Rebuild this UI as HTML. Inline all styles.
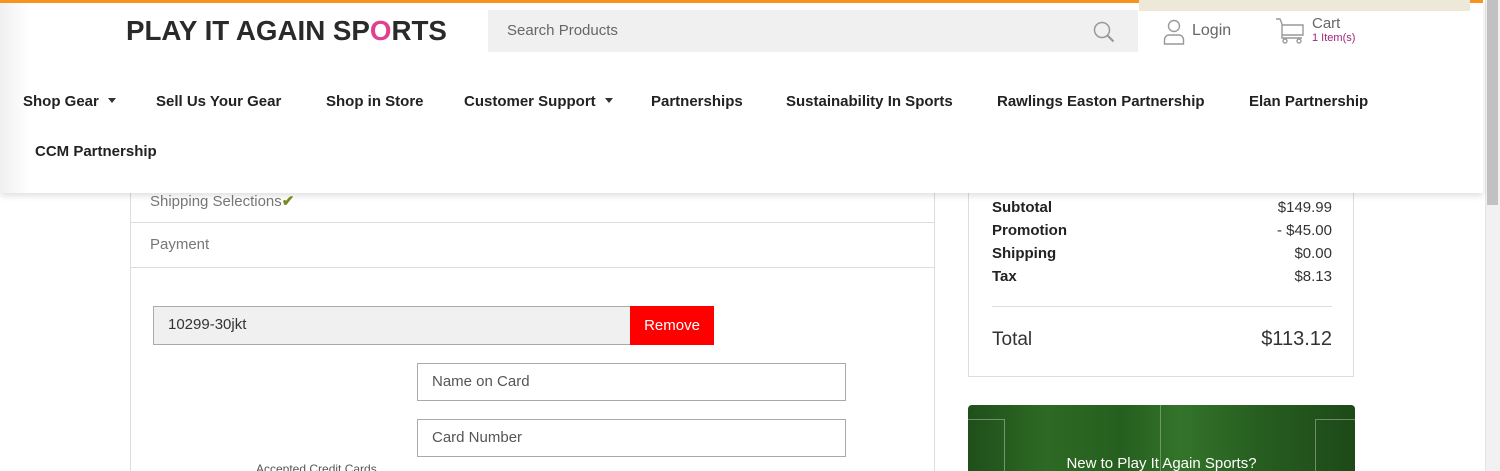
<!DOCTYPE html>
<html style="width:1500px;height:471px;overflow:hidden"><head><meta charset="utf-8"><style>
*{box-sizing:border-box;margin:0;padding:0}
body{width:1500px;height:471px;overflow:hidden;background:#fff;font-family:"Liberation Sans",sans-serif;position:relative;color:#333}
.abs{position:absolute}
.sb{left:1485px;top:0;width:15px;height:471px;background:#f1f1f1;border-left:1px solid #e4e4e4}
.thumb{left:1487px;top:0;width:11px;height:205px;background:#c1c1c1}
.header{left:0;top:0;width:1483px;height:193px;background:#fff;box-shadow:0 3px 6px rgba(0,0,0,.12);z-index:5}
.top{left:0;top:0;width:1483px;height:3px;background:#f7941d}
.logo{left:126px;top:15px;font-size:28px;font-weight:bold;letter-spacing:0;color:#2a2a2a;transform:scaleX(.99);transform-origin:left;white-space:nowrap}
.search{left:488px;top:10px;width:650px;height:42px;background:#f0f0f0}
.search span{position:absolute;left:19px;top:12px;font-size:15px;color:#666}
.banner{left:1139px;top:0;width:331px;height:11px;background:#ede8d8}
.nav{font-size:15px;font-weight:bold;color:#222;top:93px}
.tri{display:inline-block;border-left:4px solid transparent;border-right:4px solid transparent;border-top:5px solid #333;margin-left:9px;vertical-align:3px}
.lt{color:#666;font-size:15px}
.panel{left:130px;top:180px;width:805px;height:300px;border:1px solid #ddd;border-top:none}
.row{left:131px;width:803px;border-bottom:1px solid #ddd}
.inp{border:1px solid #aaa;background:#fff;font-size:15px;color:#555;padding-left:14px;line-height:36px}
.sum{left:968px;top:180px;width:386px;height:197px;border:1px solid #ddd;border-top:none}
.sl{left:992px;font-size:15px;font-weight:bold;color:#222}
.sr{right:168px;font-size:15px;color:#333;text-align:right}
.green{left:968px;top:405px;width:387px;height:66px;border-radius:4px 4px 0 0;background:linear-gradient(90deg,#1f4f1a,#2d6a24 20%,#265f1f 40%,#33742a 55%,#275e20 75%,#1d4a18);overflow:hidden}
</style></head><body>
<div class="abs sb"></div><div class="abs thumb"></div>
<div class="abs panel"></div>
<div class="abs row" style="top:180px;height:43px"></div>
<div class="abs" style="left:150px;top:192px;font-size:15px;color:#777">Shipping Selections<span style="color:#7a8a1f;font-weight:bold">✔</span></div>
<div class="abs row" style="top:223px;height:45px"></div>
<div class="abs" style="left:150px;top:236px;font-size:15px;color:#777">Payment</div>
<div class="abs inp" style="left:153px;top:306px;width:478px;height:39px;background:#f0f0f0;color:#333">10299-30jkt</div>
<div class="abs" style="left:630px;top:306px;width:84px;height:39px;background:#ff0000;color:#fff;font-size:15px;text-align:center;line-height:39px">Remove</div>
<div class="abs inp" style="left:417px;top:363px;width:429px;height:38px">Name on Card</div>
<div class="abs inp" style="left:417px;top:419px;width:429px;height:38px">Card Number</div>
<div class="abs" style="left:256px;top:462px;font-size:12px;color:#555">Accepted Credit Cards</div>
<div class="abs sum"></div>
<div class="abs sl" style="top:199px">Subtotal</div><div class="abs sr" style="top:199px">$149.99</div>
<div class="abs sl" style="top:222px">Promotion</div><div class="abs sr" style="top:222px">- $45.00</div>
<div class="abs sl" style="top:245px">Shipping</div><div class="abs sr" style="top:245px">$0.00</div>
<div class="abs sl" style="top:268px">Tax</div><div class="abs sr" style="top:268px">$8.13</div>
<div class="abs" style="left:992px;top:306px;width:340px;height:1px;background:#ddd"></div>
<div class="abs" style="left:992px;top:329px;font-size:19px;color:#333">Total</div>
<div class="abs sr" style="top:328px;font-size:20px">$113.12</div>
<div class="abs green">
<div class="abs" style="left:0;top:14px;width:37px;height:70px;border:1px solid rgba(255,255,255,.35);border-left:none"></div>
<div class="abs" style="left:192px;top:0;width:1px;height:80px;background:rgba(255,255,255,.3)"></div>
<div class="abs" style="right:0;top:14px;width:40px;height:70px;border:1px solid rgba(255,255,255,.35);border-right:none"></div>
<div class="abs" style="left:0;width:387px;top:50px;text-align:center;color:#fff;font-size:15px">New to Play It Again Sports?</div>
</div>
<div class="abs header">
<div class="abs" style="left:0;top:0;width:30px;height:193px;background:linear-gradient(90deg,#f0f0f0,#fff)"></div>
<div class="abs top"></div>
<div class="abs logo">PLAY IT AGAIN SP<span style="color:#e0408f">O</span>RTS</div>
<div class="abs search"><span>Search Products</span>
<svg class="abs" style="left:604px;top:10px" width="24" height="24" viewBox="0 0 24 24" fill="none" stroke="#999" stroke-width="1.5"><circle cx="10" cy="10" r="7.5"/><path d="M15.5 15.5l6 6" stroke-width="2.2"/></svg></div>
<div class="abs banner"></div>
<svg class="abs" style="left:1163px;top:19px" width="22" height="26" viewBox="0 0 22 26" fill="none" stroke="#999" stroke-width="1.4"><circle cx="11" cy="7" r="5.5"/><path d="M1.5 25v-4c0-3 2-5 5-5h9c3 0 5 2 5 5v4z"/></svg>
<div class="abs lt" style="left:1192px;top:22px;font-size:16px">Login</div>
<svg class="abs" style="left:1275px;top:17px" width="30" height="28" viewBox="0 0 30 28" fill="none" stroke="#999" stroke-width="1.4"><path d="M1 2h4l2 5v14h20"/><path d="M7 8h21v10H7"/><circle cx="10" cy="24" r="2"/><circle cx="24" cy="24" r="2"/></svg>
<div class="abs lt" style="left:1312px;top:15px;font-size:15px">Cart</div>
<div class="abs" style="left:1312px;top:32px;font-size:11px;color:#a0257a">1 Item(s)</div>
<div class="abs nav" style="left:23px">Shop Gear<span class="tri"></span></div>
<div class="abs nav" style="left:156px">Sell Us Your Gear</div>
<div class="abs nav" style="left:326px">Shop in Store</div>
<div class="abs nav" style="left:464px">Customer Support<span class="tri"></span></div>
<div class="abs nav" style="left:651px">Partnerships</div>
<div class="abs nav" style="left:786px">Sustainability In Sports</div>
<div class="abs nav" style="left:997px">Rawlings Easton Partnership</div>
<div class="abs nav" style="left:1249px">Elan Partnership</div>
<div class="abs nav" style="left:35px;top:143px">CCM Partnership</div>
</div>
</body></html>
